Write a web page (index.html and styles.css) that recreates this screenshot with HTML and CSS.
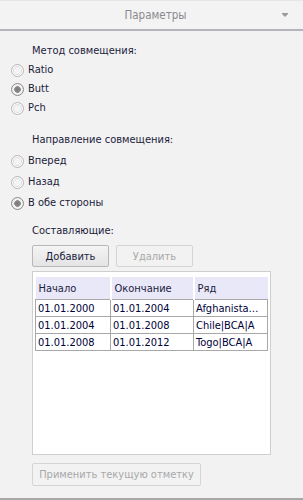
FILE: index.html
```html
<!DOCTYPE html>
<html>
<head>
<meta charset="utf-8">
<link rel="stylesheet" href="styles.css">
</head>
<body>
<div class="panel">
  <div class="header">
    <span class="title">Параметры</span>
    <span class="arrow"></span>
  </div>
  <div class="content">
    <div class="label">Метод совмещения:</div>
    <div class="radios r1">
      <div class="radio"><span class="dot"></span>Ratio</div>
      <div class="radio"><span class="dot on"></span>Butt</div>
      <div class="radio"><span class="dot"></span>Pch</div>
    </div>
    <div class="label l2">Направление совмещения:</div>
    <div class="radios r2">
      <div class="radio"><span class="dot"></span>Вперед</div>
      <div class="radio"><span class="dot"></span>Назад</div>
      <div class="radio"><span class="dot on"></span>В обе стороны</div>
    </div>
    <div class="label l3">Составляющие:</div>
    <div class="buttons">
      <div class="btn">Добавить</div>
      <div class="btn disabled">Удалить</div>
    </div>
    <div class="listbox">
      <table class="grid">
        <colgroup><col class="c1"><col class="c2"><col class="c3"></colgroup>
        <thead>
          <tr><th>Начало</th><th>Окончание</th><th class="last">Ряд</th></tr>
        </thead>
        <tbody>
          <tr><td>01.01.2000</td><td>01.01.2004</td><td>Afghanista…</td></tr>
          <tr><td>01.01.2004</td><td>01.01.2008</td><td>Chile|BCA|A</td></tr>
          <tr><td>01.01.2008</td><td>01.01.2012</td><td>Togo|BCA|A</td></tr>
        </tbody>
      </table>
    </div>
    <div class="btn disabled wide">Применить текущую отметку</div>
  </div>
</div>
</body>
</html>
```
FILE: styles.css
```css
html, body {
  margin: 0;
  padding: 0;
}
body {
  width: 303px;
  height: 500px;
  background: #f2f2f2;
  font-family: "DejaVu Sans Condensed", "DejaVu Sans", sans-serif;
  font-stretch: condensed;
  font-size: 11px;
  color: #1c1c3c;
  overflow: hidden;
}
.panel {
  height: 498px;
  border-bottom: 2px solid #a8a8a8;
  display: flex;
  flex-direction: column;
}
.header {
  height: 28px;
  border-top: 1px solid #e6e6e6;
  border-bottom: 2px solid #b4b4bc;
  background: #f3f3f3;
  display: flex;
  align-items: center;
  justify-content: center;
  position: relative;
}
.title {
  color: #8a8a8e;
  font-size: 11.5px;
  padding-left: 8px;
}
.arrow {
  position: absolute;
  right: 15px;
  top: 13px;
  width: 0;
  height: 0;
  border-left: 3px solid transparent;
  border-right: 3px solid transparent;
  border-top: 3px solid #9a9a9a;
}
.arrow::before {
  content: "";
  position: absolute;
  left: -3px;
  top: -4px;
  width: 6px;
  height: 1px;
  background: #9a9a9a;
}
.content {
  padding: 13px 0 0 32px;
  display: flex;
  flex-direction: column;
}
.label {
  height: 14px;
  line-height: 14px;
}
.radios {
  margin-left: -21px;
  display: flex;
  flex-direction: column;
}
.r1 { gap: 5px; margin-top: 5px; }
.r2 { gap: 7px; margin-top: 7px; }
.radio {
  display: flex;
  align-items: center;
  height: 14px;
  line-height: 14px;
}
.dot {
  width: 11px;
  height: 11px;
  border: 1px solid #b8b8b8;
  border-radius: 50%;
  background: #f4f4f4;
  box-shadow: inset 0 0 0 1px #ffffff, inset 0 0 0 2px #e0e0e0;
  margin-right: 4px;
  flex: none;
}
.dot.on {
  border-color: #8a8a8a;
  background: radial-gradient(circle, #7a7a7a 0, #8c8c8c 3px, #f0f0f0 3.6px);
  box-shadow: none;
}
.l2 { margin-top: 18px; }
.l3 { margin-top: 14px; }
.buttons {
  display: flex;
  gap: 7px;
  margin-top: 7px;
}
.btn {
  width: 75px;
  height: 20px;
  border: 1px solid #b8b8b8;
  border-radius: 2px;
  background: linear-gradient(#f4f4f4, #e4e4e4);
  display: flex;
  align-items: center;
  justify-content: center;
  color: #1c1c3c;
  white-space: nowrap;
}
.btn.disabled {
  background: #f2f2f2;
  border-color: #d4d4d4;
  color: #a8a8a8;
}
.btn.wide {
  width: 167px;
  height: 21px;
  margin-top: 8px;
}
.listbox {
  margin-top: 4px;
  border: 1px solid #cfcfcf;
  background: #ffffff;
  padding: 5px 0 0 1px;
  box-sizing: border-box;
  width: 239px;
  height: 184px;
}
.grid {
  border-collapse: collapse;
  margin-left: 1px;
  width: 232px;
  table-layout: fixed;
}
col.c1 { width: 75px; }
col.c2 { width: 83px; }
col.c3 { width: 74px; }
.grid th {
  background: #e8e8f8;
  font-weight: normal;
  text-align: left;
  height: 22px;
  padding: 0 3px;
  border-right: 2px solid #ffffff;
  color: #1c1c3c;
}
.grid th.last { border-right: none; }
.grid td {
  border: 1px solid #a8a8a8;
  height: 16px;
  padding: 0 2px;
  white-space: nowrap;
  overflow: hidden;
  color: #00003a;
}
```
